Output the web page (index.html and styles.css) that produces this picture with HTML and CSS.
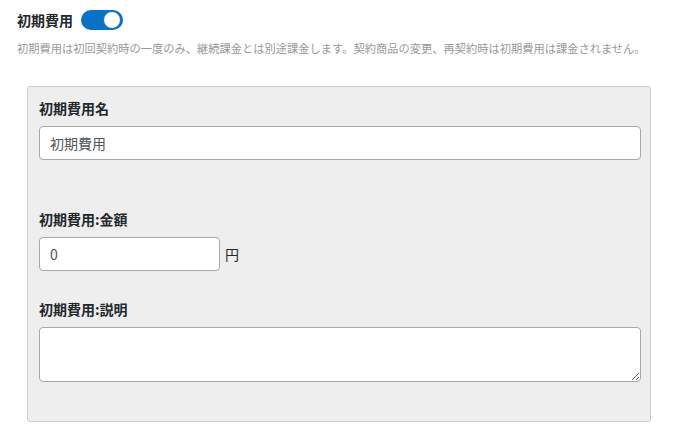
FILE: index.html
```html
<!DOCTYPE html>
<html lang="ja">
<head>
<meta charset="utf-8">
<title>初期費用</title>
<link rel="stylesheet" href="styles.css">
</head>
<body>
<div class="page">
  <div class="head">
    <span class="title">初期費用</span>
    <span class="toggle"><span class="knob"></span></span>
  </div>
  <p class="desc">初期費用は初回契約時の一度のみ、継続課金とは別途課金します。契約商品の変更、再契約時は初期費用は課金されません。</p>
  <div class="panel">
    <div class="field field-name">
      <label class="label">初期費用名</label>
      <input class="input input-wide" type="text" value="初期費用">
    </div>
    <div class="field field-amount">
      <label class="label">初期費用:金額</label>
      <div class="amount-row">
        <input class="input input-short" type="text" value="0">
        <span class="unit">円</span>
      </div>
    </div>
    <div class="field">
      <label class="label">初期費用:説明</label>
      <textarea class="input textarea"></textarea>
    </div>
  </div>
</div>
</body>
</html>
```

FILE: styles.css
```css
* { box-sizing: border-box; }
html, body { margin: 0; padding: 0; background: #fff; }
body {
  font-family: "Noto Sans CJK JP", "Noto Sans", sans-serif;
  color: #23282d;
}
.page {
  padding: 9px 25px 0 17px;
}
.head {
  display: flex;
  align-items: center;
  gap: 8px;
  height: 22px;
}
.title {
  font-size: 14px;
  font-weight: 700;
  line-height: 22px;
}
.toggle {
  position: relative;
  display: inline-block;
  width: 42px;
  height: 20px;
  border-radius: 10px;
  background: #0a72c6;
}
.knob {
  position: absolute;
  top: 1px;
  right: 2px;
  width: 18px;
  height: 18px;
  border-radius: 50%;
  background: #fff;
  border: 1px solid #0a72c6;
}
.desc {
  margin: 8px 0 0;
  font-size: 11.25px;
  line-height: 18px;
  color: #999;
  white-space: nowrap;
}
.panel {
  margin: 29px 0 0 10px;
  width: 624px;
  background: #eeeeee;
  border: 1px solid #cfcfcf;
  border-radius: 3px;
  padding: 11px 10px 39px 11px;
}
.field { display: flex; flex-direction: column; align-items: flex-start; }
.field-name { margin-bottom: 49px; }
.field-amount { margin-bottom: 28px; }
.label {
  font-size: 14px;
  font-weight: 700;
  line-height: 21px;
  margin-bottom: 7px;
}
.input {
  font-family: "Noto Sans CJK JP", "Noto Sans", sans-serif;
  font-size: 14px;
  color: #50575e;
  background: #fff;
  border: 1px solid #a7a7a7;
  border-radius: 4px;
  padding: 0 10px;
  height: 34px;
  outline: none;
}
.input-wide { width: 602px; }
.amount-row { display: flex; align-items: center; gap: 5px; }
.input-short { width: 181px; }
.unit { font-size: 14px; color: #23282d; }
.textarea {
  width: 602px;
  height: 55px;
  resize: vertical;
  display: block;
  padding: 6px 10px;
}
```
